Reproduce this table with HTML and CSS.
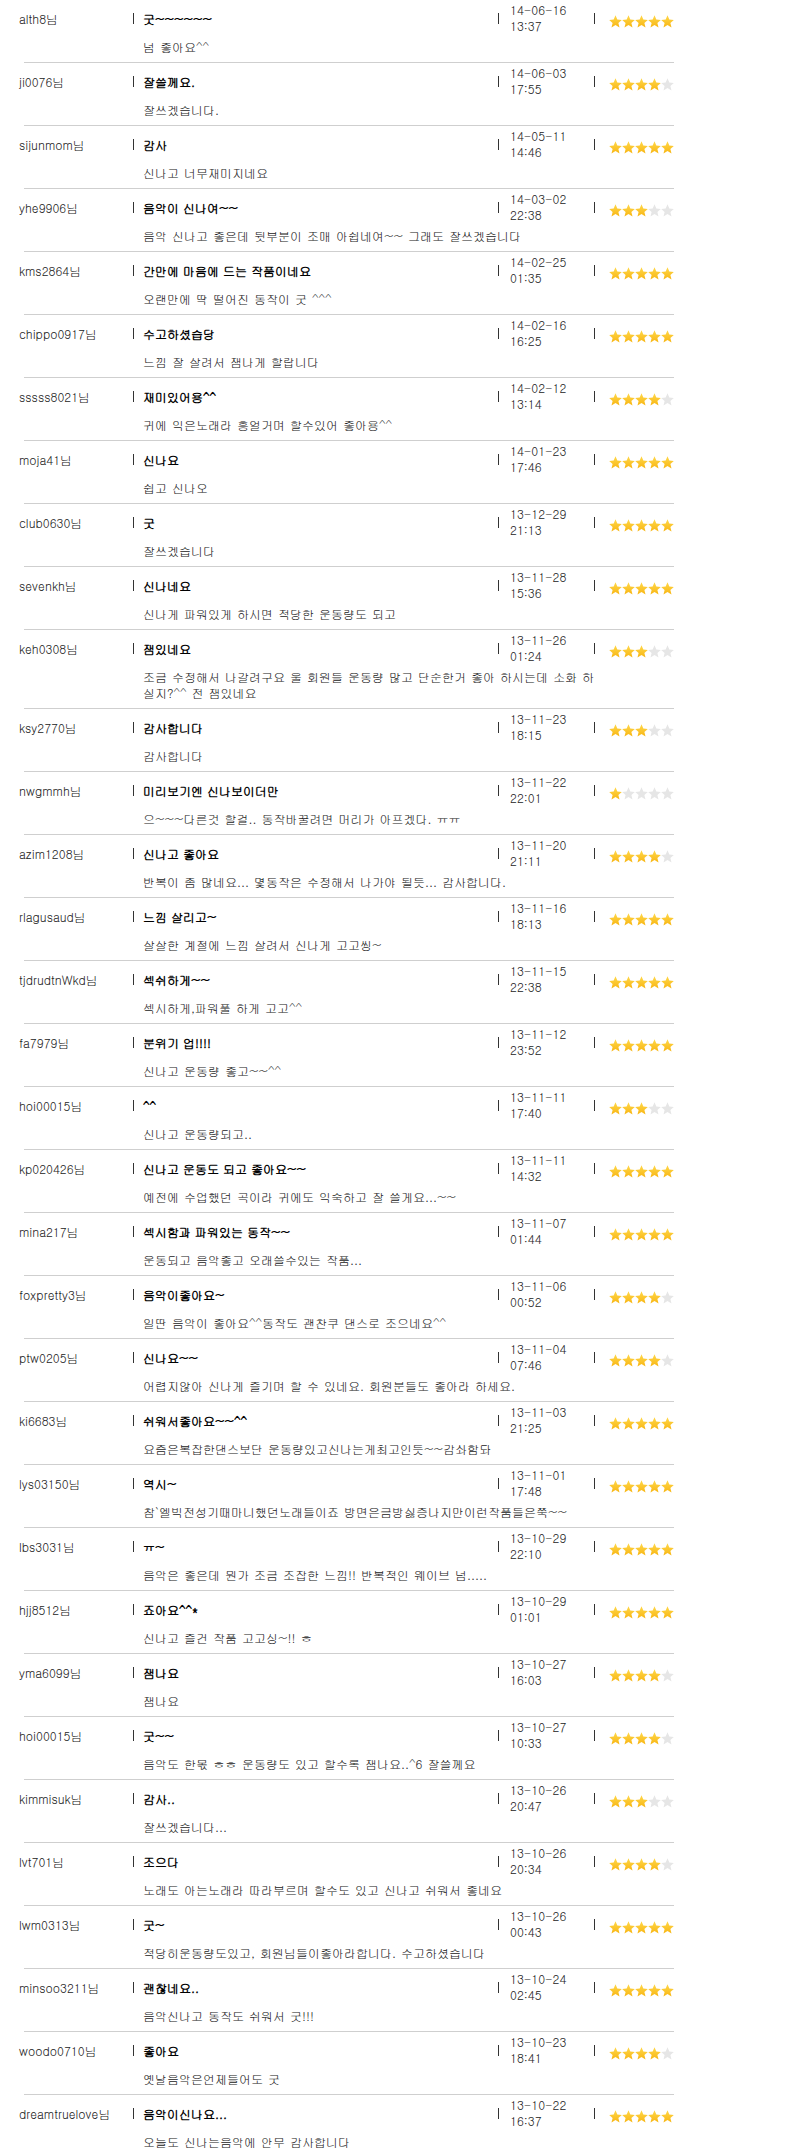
FILE: index.html
```html
<!DOCTYPE html>
<html lang="ko">
<head>
    <meta charset="UTF-8">
    <meta name="viewport" content="width=device-width, initial-scale=1.0">
    <title>상품평</title>
    <link rel="stylesheet" href="styles.css">
</head>
<body>
    <svg class="defs" width="0" height="0">
        <defs>
            <linearGradient id="gold" x1="0" y1="0" x2="0" y2="1">
                <stop offset="0" stop-color="#ffd84a"/>
                <stop offset="1" stop-color="#f8b614"/>
            </linearGradient>
            <polygon id="star" points="6.5,0.3 8.3,4.6 12.8,4.9 9.4,7.9 10.5,12.4 6.5,10 2.5,12.4 3.6,7.9 0.2,4.9 4.7,4.6"/>
        </defs>
    </svg>

    <div class="review-list" id="reviews"></div>

    <script>
        const reviews = [
            ['alth8', '굿~~~~~~', '넘 좋아요^^', '14-06-16', '13:37', 5],
            ['ji0076', '잘쓸께요.', '잘쓰겠습니다.', '14-06-03', '17:55', 4],
            ['sijunmom', '감사', '신나고 너무재미지네요', '14-05-11', '14:46', 5],
            ['yhe9906', '음악이 신나여~~', '음악 신나고 좋은데 뒷부분이 조매 아쉽네여~~ 그래도 잘쓰겠습니다', '14-03-02', '22:38', 3],
            ['kms2864', '간만에 마음에 드는 작품이네요', '오랜만에 딱 떨어진 동작이 굿 ^^^', '14-02-25', '01:35', 5],
            ['chippo0917', '수고하셨습당', '느낌 잘 살려서 잼나게 할랍니다', '14-02-16', '16:25', 5],
            ['sssss8021', '재미있어용^^', '귀에 익은노래라 흥얼거며 할수있어 좋아용^^', '14-02-12', '13:14', 4],
            ['moja41', '신나요', '쉽고 신나오', '14-01-23', '17:46', 5],
            ['club0630', '굿', '잘쓰겠습니다', '13-12-29', '21:13', 5],
            ['sevenkh', '신나네요', '신나게 파워있게 하시면 적당한 운동량도 되고', '13-11-28', '15:36', 5],
            ['keh0308', '잼있네요', '조금 수정해서 나갈려구요 울 회원들 운동량 많고 단순한거 좋아 하시는데 소화 하실지?^^ 전 잼있네요', '13-11-26', '01:24', 3],
            ['ksy2770', '감사합니다', '감사합니다', '13-11-23', '18:15', 3],
            ['nwgmmh', '미리보기엔 신나보이더만', '으~~~다른것 할걸.. 동작바꿀려면 머리가 아프겠다. ㅠㅠ', '13-11-22', '22:01', 1],
            ['azim1208', '신나고 좋아요', '반복이 좀 많네요... 몇동작은 수정해서 나가야 될듯... 감사합니다.', '13-11-20', '21:11', 4],
            ['rlagusaud', '느낌 살리고~', '살살한 계절에 느낌 살려서 신나게 고고씽~', '13-11-16', '18:13', 5],
            ['tjdrudtnWkd', '섹쉬하게~~', '섹시하게,파워풀 하게 고고^^', '13-11-15', '22:38', 5],
            ['fa7979', '분위기 업!!!!', '신나고 운동량 좋고~~^^', '13-11-12', '23:52', 5],
            ['hoi00015', '^^', '신나고 운동량되고..', '13-11-11', '17:40', 3],
            ['kp020426', '신나고 운동도 되고 좋아요~~', '예전에 수업했던 곡이라 귀에도 익숙하고 잘 쓸게요...~~', '13-11-11', '14:32', 5],
            ['mina217', '섹시함과 파워있는 동작~~', '운동되고 음악좋고 오래쓸수있는 작품...', '13-11-07', '01:44', 5],
            ['foxpretty3', '음악이좋아요~', '일딴 음악이 좋아요^^동작도 괜찬쿠 댄스로 조으네요^^', '13-11-06', '00:52', 4],
            ['ptw0205', '신나요~~', '어렵지않아 신나게 즐기며 할 수 있네요. 회원분들도 좋아라 하세요.', '13-11-04', '07:46', 4],
            ['ki6683', '쉬워서좋아요~~^^', '요즘은복잡한댄스보단 운동량있고신나는게최고인듯~~감솨함돠', '13-11-03', '21:25', 5],
            ['lys03150', '역시~', '참`엘빅전성기때마니했던노래들이죠 방면은금방싫증나지만이런작품들은쭉~~', '13-11-01', '17:48', 5],
            ['lbs3031', 'ㅠ~', '음악은 좋은데 뭔가 조금 조잡한 느낌!! 반복적인 웨이브 넘.....', '13-10-29', '22:10', 5],
            ['hjj8512', '죠아요^^*', '신나고 즐건 작품 고고싱~!! ㅎ', '13-10-29', '01:01', 5],
            ['yma6099', '잼나요', '잼나요', '13-10-27', '16:03', 4],
            ['hoi00015', '굿~~', '음악도 한몫 ㅎㅎ 운동량도 있고 할수록 잼나요..^6 잘쓸께요', '13-10-27', '10:33', 4],
            ['kimmisuk', '감사..', '잘쓰겠습니다...', '13-10-26', '20:47', 3],
            ['lvt701', '조으다', '노래도 아는노래라 따라부르며 할수도 있고 신나고 쉬워서 좋네요', '13-10-26', '20:34', 4],
            ['lwm0313', '굿~', '적당히운동량도있고, 회원님들이좋아라합니다. 수고하셨습니다', '13-10-26', '00:43', 5],
            ['minsoo3211', '괜찮네요..', '음악신나고 동작도 쉬워서 굿!!!', '13-10-24', '02:45', 5],
            ['woodo0710', '좋아요', '옛날음악은언제들어도 굿', '13-10-23', '18:41', 4],
            ['dreamtruelove', '음악이신나요...', '오늘도 신나는음악에 안무 감사합니다', '13-10-22', '16:37', 5]
        ];

        function starIcons(score) {
            let html = '';
            for (let i = 0; i < 5; i++) {
                let fill = i < score ? 'url(#gold)' : '#e6e6e6';
                html += `<svg viewBox="0 0 13 13"><use href="#star" fill="${fill}"/></svg>`;
            }
            return html;
        }

        let list = document.getElementById('reviews');
        reviews.forEach(([user, subject, text, day, time, score]) => {
            let row = document.createElement('div');
            row.className = 'review';
            row.innerHTML = `
                <div class="review-head">
                    <span class="user">${user}님</span>
                    <span class="cell subject"><i class="bar"></i><b>${subject}</b></span>
                    <span class="cell date"><i class="bar"></i><span class="when">${day}<br>${time}</span></span>
                    <span class="cell rating"><i class="bar"></i><span class="stars">${starIcons(score)}</span></span>
                </div>
                <p class="review-body">${text}</p>`;
            list.appendChild(row);
        });
    </script>
</body>
</html>
```

FILE: styles.css
```css
body {
    margin: 0;
    font-family: Gulim, "Noto Sans CJK KR", sans-serif;
    font-size: 12px;
    color: #222;
    background: #fff;
}
.defs {
    display: block;
}
.review-list {
    margin-left: 24px;
    width: 650px;
}
.review {
    border-bottom: 1px solid #cfcfcf;
}
.review:last-child {
    border-bottom: none;
}
.review:last-child .review-body {
    padding-bottom: 5px;
}
.review-head {
    display: grid;
    grid-template-columns: 109px 365px 96px 80px;
    height: 36px;
    align-items: center;
}
.user {
    margin-left: -5px;
    white-space: nowrap;
}
.cell {
    display: flex;
    align-items: center;
    height: 100%;
}
.bar {
    width: 1px;
    height: 11px;
    background: #333;
}
.subject .bar {
    margin-right: 9px;
}
.subject b {
    color: #000;
}
.date .bar {
    margin-right: 11px;
}
.when {
    line-height: 16px;
}
.rating .bar {
    margin-right: 14px;
}
.stars {
    display: flex;
    padding-top: 7px;
}
.stars svg {
    display: block;
    width: 13px;
    height: 13px;
}
.review-body {
    margin: 0;
    width: 455px;
    padding: 3px 0 7px 119px;
    line-height: 16px;
    word-spacing: 1px;
}
```
